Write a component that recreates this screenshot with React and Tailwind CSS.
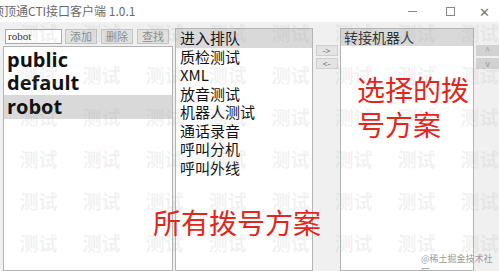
import React from "react";

const cjk = '"Noto Sans CJK SC", "Noto Sans", sans-serif';

const Watermark = () => {
  const cells = Array.from({ length: 60 });
  return (
    <div className="pointer-events-none absolute left-[-56px] top-[12px] grid grid-cols-[repeat(10,63px)] auto-rows-[42px]">
      {cells.map((_, i) => (
        <div key={i} className="flex items-center justify-center text-[19px] font-bold text-[rgba(170,170,170,0.16)]">
          测试
        </div>
      ))}
    </div>
  );
};

const App = () => {
  // Dial plan data
  const plans = ["public", "default", "robot"];
  const apps = ["进入排队", "质检测试", "XML", "放音测试", "机器人测试", "通话录音", "呼叫分机", "呼叫外线"];
  const tools = ["添加", "删除", "查找"];

  return (
    <div className="relative w-[499px] h-[271px] overflow-hidden bg-[#f0f0f0]" style={{ fontFamily: cjk }}>
      {/* Title bar */}
      <div className="h-[22px] bg-white flex items-center">
        <span className="-ml-[8px] text-[12px] text-[#6a6a6a] whitespace-nowrap">顶顶通CTI接口客户端 1.0.1</span>
        <div className="ml-auto flex items-center h-full text-[#777]">
          <span className="w-[38px] flex justify-center"><span className="block w-[9px] h-px bg-[#888]"></span></span>
          <span className="w-[38px] flex justify-center"><span className="block w-[9px] h-[9px] border border-[#888]"></span></span>
          <span className="w-[30px] flex justify-center text-[13px] leading-none">✕</span>
        </div>
      </div>

      {/* Body */}
      <div className="flex h-[249px] pt-[6px]">
        {/* Left: plans */}
        <div className="ml-[3px] w-[170px] flex flex-col">
          <div className="flex items-center h-[16px] pl-[2px]">
            <div className="w-[57px] h-[15px] bg-white border border-[#a8a8a8] flex items-center px-[2px] text-[11px] text-[#333]" style={{ fontFamily: '"Liberation Serif", serif' }}>
              robot
            </div>
            <div className="flex gap-[4px] ml-[3px]">
              {tools.map((t) => (
                <div key={t} className="w-[32px] h-[15px] bg-[#e1e1e1] border border-[#c4c4c4] flex items-center justify-center text-[11px] text-[#8c8c8c]">
                  {t}
                </div>
              ))}
            </div>
          </div>
          <div className="mt-[2px] flex-1 bg-white border border-[#b4b4b4] pt-[1px]" style={{ fontFamily: '"Open Sans", "Noto Sans", sans-serif' }}>
            {plans.map((p) => (
              <div key={p} className={`h-[23.5px] flex items-center pl-[3px] text-[20px] font-bold text-[#111] ${p === "robot" ? "bg-[#d9d9d9]" : ""}`}>
                {p}
              </div>
            ))}
          </div>
        </div>

        {/* Middle: apps */}
        <div className="ml-[2px] w-[138px] bg-white border border-[#b4b4b4]">
          {apps.map((a, i) => (
            <div key={a} className={`h-[18.5px] flex items-center pl-[4px] text-[15px] text-[#111] ${i === 0 ? "bg-[#d9d9d9]" : ""}`}>
              {a}
            </div>
          ))}
        </div>

        {/* Arrow buttons */}
        <div className="w-[27px] flex flex-col items-center pt-[17px] gap-[2px]">
          <div className="w-[22px] h-[11px] bg-[#e4e4e4] border border-[#cfcfcf] flex items-center justify-center text-[9px] leading-none text-[#777]">-&gt;</div>
          <div className="w-[22px] h-[11px] bg-[#e4e4e4] border border-[#cfcfcf] flex items-center justify-center text-[9px] leading-none text-[#777]">&lt;-</div>
        </div>

        {/* Right: selected */}
        <div className="w-[134px] bg-white border border-[#b4b4b4]">
          <div className="h-[17px] flex items-center pl-[3px] text-[14px] text-[#333] bg-[#d9d9d9]">转接机器人</div>
        </div>

        {/* Order buttons */}
        <div className="flex-1 flex flex-col items-end pt-[17px] gap-[2px]">
          <div className="w-[23px] h-[11px] bg-[#d2d2d2] flex items-center justify-center text-[9px] leading-none text-[#999]">^</div>
          <div className="w-[23px] h-[11px] bg-[#d2d2d2] flex items-center justify-center text-[9px] leading-none text-[#999]">v</div>
        </div>
      </div>

      <Watermark />

      {/* Annotations */}
      <div className="absolute left-[357px] top-[72px] text-[28px] leading-[35px] text-[#e0261e]">
        选择的拨<br />号方案
      </div>
      <div className="absolute left-[153px] top-[205px] text-[28px] leading-[35px] text-[#e0261e] whitespace-nowrap">
        所有拨号方案
      </div>
      <div className="absolute left-[421px] top-[252px] text-[9px] text-[#9a9a9a]">@稀土掘金技术社区</div>
    </div>
  );
};

export default App;
